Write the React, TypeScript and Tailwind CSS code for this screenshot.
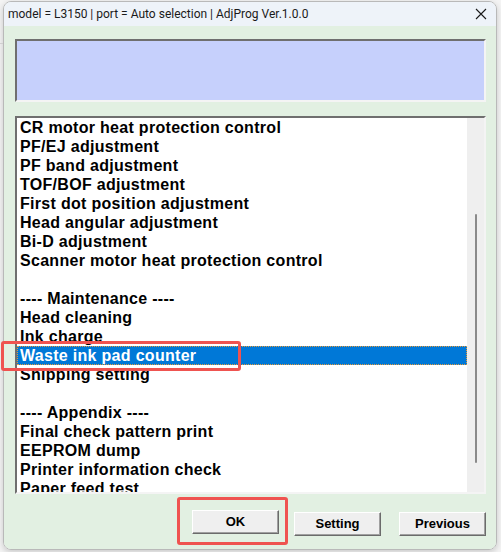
const items = [
  "CR motor heat protection control",
  "PF/EJ adjustment",
  "PF band adjustment",
  "TOF/BOF adjustment",
  "First dot position adjustment",
  "Head angular adjustment",
  "Bi-D adjustment",
  "Scanner motor heat protection control",
  "",
  "---- Maintenance ----",
  "Head cleaning",
  "Ink charge",
  "Waste ink pad counter",
  "Shipping setting",
  "",
  "---- Appendix ----",
  "Final check pattern print",
  "EEPROM dump",
  "Printer information check",
  "Paper feed test",
]

const selected = "Waste ink pad counter"

function Button({ label }: { label: string }) {
  return (
    <button className="w-[87px] h-[24px] bg-[#efefef] border border-t-white border-l-white border-r-[#6b6b6b] border-b-[#6b6b6b] shadow-[inset_-1px_-1px_0_#a0a0a0] text-[13px] font-bold text-black font-['Liberation_Sans',Arial,sans-serif]">
      {label}
    </button>
  )
}

export default function App() {
  return (
    <div className="relative w-[501px] h-[552px] bg-[#f4f4f4] overflow-hidden">
      <div className="absolute left-0 top-[43px] w-[3px] h-px bg-[#cfcfcf]" />
      <div className="ml-[3px] mt-px w-[494px] h-[549px] flex flex-col rounded-[8px] border border-[#b9b9b9] overflow-hidden shadow-[0_2px_6px_rgba(0,0,0,0.18)]">
        {/* title bar */}
        <div className="h-[24px] bg-[#eef3f9] flex items-center pl-[4px] pr-[9px] shrink-0">
          <span className="text-[12px] text-[#1a1a1a] font-['Roboto',sans-serif] leading-none">
            model = L3150 | port = Auto selection | AdjProg Ver.1.0.0
          </span>
          <svg className="ml-auto" width="12" height="12" viewBox="0 0 12 12">
            <path d="M1 1 L11 11 M11 1 L1 11" stroke="#1a1a1a" strokeWidth="1.1" fill="none" />
          </svg>
        </div>

        {/* body */}
        <div className="flex-1 bg-[#e2f0e2] pl-[11px] pt-[13px] flex flex-col">
          <div className="w-[471px] h-[63px] bg-[#c6d0fc] border-2 border-t-[#6f6f6f] border-l-[#6f6f6f] border-r-[#f4f4f4] border-b-[#f4f4f4]" />

          <div className="mt-[14px] w-[471px] h-[378px] bg-white border-2 border-t-[#6f6f6f] border-l-[#6f6f6f] border-r-[#f4f4f4] border-b-[#f4f4f4] flex overflow-hidden">
            <div className="flex-1 flex flex-col">
              {items.map((t, i) => {
                const sel = t === selected
                return (
                  <div
                    key={i}
                    className={
                      sel
                        ? "h-[19px] shrink-0 pl-[2px] bg-[#0078d7] text-white border border-dotted border-[#e39a3b] leading-[17px] text-[16px] tracking-[0.3px] font-bold font-['Liberation_Sans',Arial,sans-serif] whitespace-nowrap"
                        : "h-[19px] shrink-0 pl-[3px] text-black leading-[19px] text-[16px] tracking-[0.3px] font-bold font-['Liberation_Sans',Arial,sans-serif] whitespace-nowrap"
                    }
                  >
                    {t}
                  </div>
                )
              })}
            </div>
            {/* scrollbar */}
            <div className="w-[17px] shrink-0 bg-[#efefef] flex justify-center pt-[96px]">
              <div className="w-[2px] h-[249px] bg-[#8a8a8a] rounded-full" />
            </div>
          </div>

          <div className="mt-[16px] flex pl-[177px]">
            <Button label="OK" />
            <div className="ml-[15px]">
              <Button label="Setting" />
            </div>
            <div className="ml-[18px]">
              <Button label="Previous" />
            </div>
          </div>
        </div>
      </div>

      {/* red annotation boxes */}
      <div className="absolute left-[1px] top-[341px] w-[240px] h-[30px] border-[3px] border-[#ef5350] rounded-[3px]" />
      <div className="absolute left-[177px] top-[497px] w-[111px] h-[48px] border-[3px] border-[#ef5350] rounded-[3px]" />
    </div>
  )
}
